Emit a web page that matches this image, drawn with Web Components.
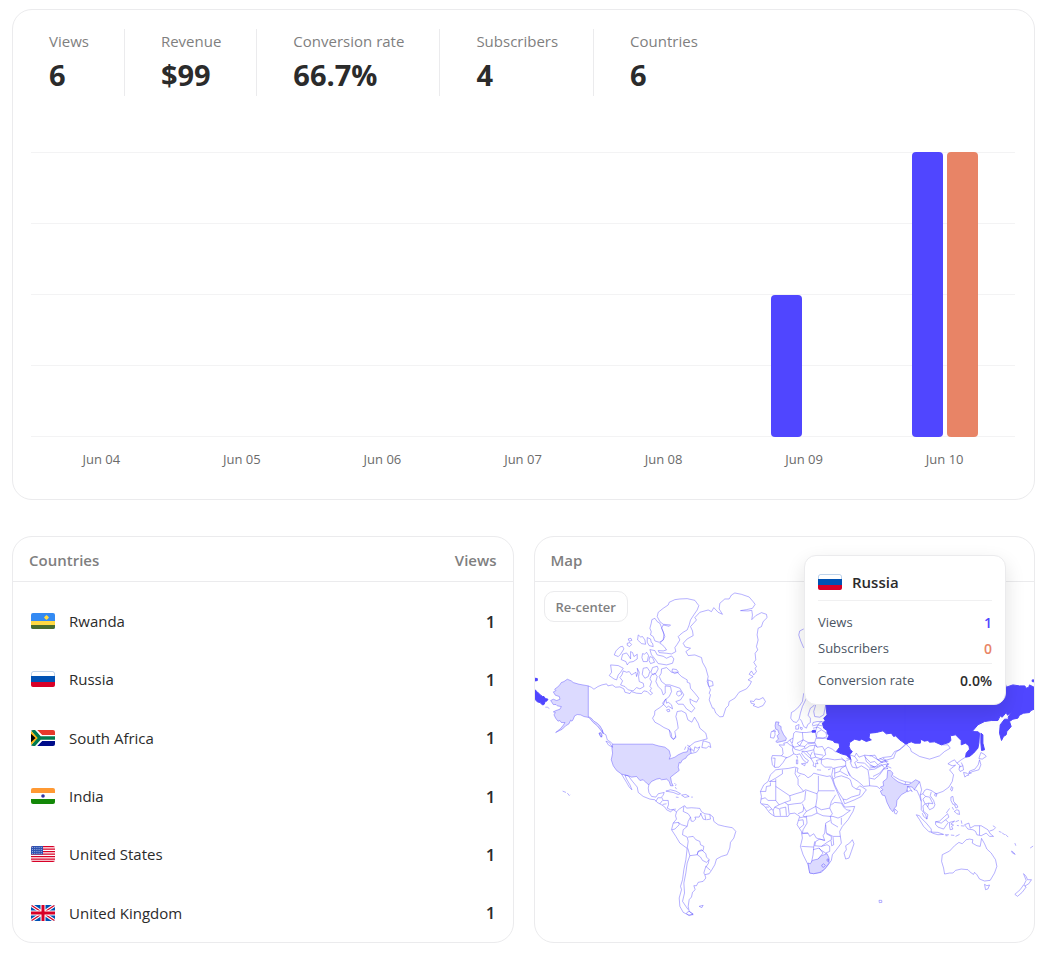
<!DOCTYPE html>
<html lang="en">
<head>
<meta charset="utf-8">
<meta name="viewport" content="width=device-width, initial-scale=1">
<title>Analytics</title>
<style>
  body {
    margin: 0;
    padding: 9px 10px 16px 12px;
    background: #fff;
    color: #2b2b2b;
    font-family: "Open Sans", "Noto Sans", sans-serif;
    font-size: 15px;
    --accent: #5046ff;
    --accent-2: #e88466;
    --muted: #7f7f7f;
    --line: #ebebed;
    --grid: #f3f3f4;
  }
  .row { display: grid; grid-template-columns: 1fr 1fr; gap: 20px; margin-top: 36px; }
</style>
</head>
<body>
<panel-card>
  <stats-bar>
    <stat-item label="Views">6</stat-item>
    <stat-item label="Revenue">$99</stat-item>
    <stat-item label="Conversion rate">66.7%</stat-item>
    <stat-item label="Subscribers">4</stat-item>
    <stat-item label="Countries">6</stat-item>
  </stats-bar>
  <bar-chart></bar-chart>
</panel-card>
<div class="row">
  <panel-card><countries-table></countries-table></panel-card>
  <panel-card>
    <map-panel>
      <map-tooltip slot="tooltip" country="Russia" flag="ru" views="1" subscribers="0" rate="0.0%"></map-tooltip>
    </map-panel>
  </panel-card>
</div>

<template id="map-art">
<svg viewBox="535 582 500 360" role="img" aria-label="World map of views">
  <!-- Alaska, Chukotka -->
  <g transform="translate(534 580) scale(.33333)">
    <path class="lit" d="M100 298L112 303L118 308L135 313L163 318L163 410L172 415L180 424L190 430L198 438L205 450L208 462L198 448L190 438L178 428L165 413L150 410L140 405L130 404L122 408L118 418L114 424L110 421L105 432L95 438L85 448L65 458L80 446L88 436L93 428L82 428L78 422L72 424L65 415L60 405L64 398L58 396L66 392L78 388L82 380L70 378L66 374L58 374L50 362L58 358L68 362L78 358L76 350L64 346L58 336L66 332L62 328L75 318L82 308L90 305Z"/>
    <path class="hot" d="M3 330L10 336L20 346L26 350L30 350L34 356L42 358L38 364L34 364L30 374L25 375L18 368L10 366L3 358ZM3 295L10 296L10 302L3 303Z"/>
    <path d="M34 382L40 382L46 386M195 460l6 -2l4 10l-4 4Z"/>
  </g>
  <!-- Arctic Canada, Greenland, Iceland -->
  <g transform="translate(600 585) scale(.33333)">
    <path d="M-35 303L-26 307L-18 313L-6 305L6 300L20 297L24 303L37 300L47 307L60 306L72 312L75 322L90 326L94 320L110 325L125 326L132 318L142 320L152 330L158 325L150 318L155 310L150 305L155 290L150 282L155 270L165 265L172 275L168 290L175 305L185 315L190 330L196 325L196 303L212 305L215 320L208 335L196 345L190 360L180 368L165 378L164 390L158 400L165 412L180 420L192 428L208 435L212 455L220 464L228 458L225 440L235 430L232 410L228 395L232 380L245 378L258 385L264 405L276 412L284 397L295 415L300 430L318 445L322 462L300 468L285 472L272 482L262 490"/>
    <path d="M240 42L262 41L285 46L297 62L292 75L283 88L272 105L268 120L262 135L250 142L240 150L235 155L240 165L232 178L225 188L228 200L215 207L200 205L178 203L175 197L190 198L200 195L193 185L185 178L180 175L190 165L195 155L190 140L185 130L190 120L208 124L212 120L190 118L180 110L172 95L175 82L190 70L205 60L208 52L225 44Z"/>
    <path d="M165 100L172 110L180 115L186 130L192 148L190 165L178 172L165 168L160 155L152 150L154 140L150 130L154 115L156 104ZM115 150L122 156L128 155L135 165L137 178L125 176L113 165ZM142 158L152 162L154 172L158 175L160 185L148 182L142 172ZM85 162l8 -2l3 6l-8 3ZM82 175l8 -2l5 6l-6 6l-7 -4ZM68 184L60 186L48 198L43 210L55 215L62 208L72 192Z"/>
    <path d="M68 208L80 204L88 215L92 222L92 200L98 203L102 215L112 208L112 222L100 230L88 232L82 240L78 230L64 224ZM128 206L134 208L140 202L146 212L142 230L130 230L126 218ZM150 194L165 197L172 210L190 214L200 220L215 213L222 222L218 235L200 240L175 236L165 222L155 210ZM150 215L158 218L164 232L152 236L147 226Z"/>
    <path d="M32 240L55 242L70 250L62 262L55 270L50 285L42 282L28 272L35 262ZM70 258L80 262L88 260L95 270L108 262L110 275L114 262L112 250L118 262L116 275L118 290L130 295L132 305L120 312L110 308L100 318L85 315L75 305L62 300L68 288L60 278L66 270ZM130 250L142 248L150 260L145 275L135 280L127 268ZM158 248L172 244L175 252L168 265L160 270L153 262Z"/>
    <path d="M185 252L200 248L215 262L232 262L245 275L262 285L262 292L270 295L272 310L285 325L297 340L290 352L280 348L270 342L272 355L285 370L275 382L260 372L250 358L235 358L228 350L242 345L252 330L240 310L225 305L210 300L198 300L185 290L178 275L184 265ZM218 252l12 2l6 8l-12 4l-8 -6ZM232 320l10 -2l4 10l-10 6l-6 -6ZM188 355L198 342L200 355L205 352L215 360L218 372L206 364L200 368ZM200 375l8 -2l2 6l-6 2Z"/>
    <path d="M310 468L318 470L330 474L333 488L326 484L320 490L306 488ZM268 498L275 492L282 500L285 486L292 490L300 486L296 494L290 502L275 506Z"/>
    <path d="M405 24L425 28L448 36L460 50L466 58L458 70L440 74L422 77L445 78L456 76L458 90L456 104L468 92L485 83L500 88L502 98L490 110L485 125L475 130L472 150L475 165L470 185L474 195L466 205L468 225L462 232L470 245L466 250L470 260L462 270L455 258L448 268L460 275L445 285L455 290L450 300L440 312L418 322L405 340L388 350L386 362L378 370L370 395L360 396L348 385L342 370L338 370L328 345L332 330L328 325L332 315L325 300L325 285L338 290L340 302L328 305L322 290L325 275L318 250L308 232L305 218L285 210L265 212L258 200L272 190L256 186L250 175L262 162L280 152L278 138L272 125L290 105L285 98L300 82L325 75L335 80L342 68L355 82L368 88L358 72L360 55L375 42L388 42L395 30Z"/>
    <path d="M452 348L462 350L468 342L478 344L490 338L497 350L490 362L475 368L460 362L465 358L454 355Z"/>
  </g>
  <!-- Americas -->
  <g transform="translate(550 730) scale(.33333)">
    <path class="lit" d="M188 43L308 43L325 48L345 52L358 62L362 78L358 88L375 82L385 75L400 68L412 66L416 55L422 60L424 70L412 78L408 85L398 90L392 100L388 98L385 112L388 122L375 132L362 142L365 158L370 168L362 168L358 155L350 148L335 150L330 146L320 148L305 155L297 165L290 160L280 150L270 152L260 140L245 142L235 138L215 133L200 122L190 108L184 90L188 70L186 55Z"/>
    <path d="M156 0L160 10L168 15L172 30L184 38L188 43M168 34l10 4l10 14l-12 -6ZM148 10l5 2l3 10l-6 -5ZM412 46L420 50L424 62M408 50L404 60M358 0L364 10L366 24L372 28L378 18"/>
    <path d="M215 133L222 145L230 158L238 172L246 180L240 165L230 148L225 136L235 138L248 155L262 172L265 188L280 200L300 208L315 210L322 218L335 225L345 232L350 240L362 246L370 240L380 246M297 165L295 175L297 188L305 200L318 202L325 192L343 188L340 196L335 202L340 212L355 212L356 225L352 235L362 240L378 238M318 215L324 204L334 204M330 222L338 212M338 224L350 222"/>
    <path d="M348 184L362 180L378 184L392 192L385 194L370 188ZM395 196L408 194L418 200L405 203ZM378 202l8 1M424 202l5 0M374 160l3 4M376 168l4 -3M376 172l4 6M38 184L48 188M52 190L58 197L60 195"/>
    <path d="M380 246L388 238L400 230L405 228L410 235L425 234L440 235L450 236L455 246L465 252L480 254L490 262L492 275L505 285L525 290L548 294L558 305L552 325L542 338L540 355L532 375L515 380L500 388L495 405L485 422L478 432L465 435L468 445L460 455L445 458L440 468L432 468L436 480L428 488L425 502L418 510L415 530L418 545L430 555L415 556L400 548L390 530L388 505L395 480L392 470L398 450L402 420L408 390L412 356L390 340L378 320L365 300L370 280L380 268L377 258Z"/>
    <path d="M402 230L400 245L415 252L422 262L415 275L412 290M370 280L385 278L395 285L412 290L400 300L398 315L412 322L415 335L412 356M366 300L375 298L388 285L386 278M415 322L430 320L438 330L450 335L452 345L462 350L460 362L445 365L442 375L420 378L414 356M442 375L445 365L455 360L468 372L470 382L478 390L470 398L458 392L452 382ZM420 378L412 400L408 430L402 460L404 490L398 515L408 530L415 540M468 410L482 422M468 410L462 430L465 435M478 390L475 402L468 412M422 262L424 274L430 275L438 268L435 262L448 262L454 250M452 250L460 268L468 270L465 255M480 254L482 268L470 270M448 530L460 527L456 534ZM412 548L418 545L430 553L418 558L410 552Z"/>
  </g>
  <!-- Europe, Africa, Middle East -->
  <g transform="translate(740 690) scale(.33333)">
    <path d="M192 10L188 35L178 50L165 62L155 68L153 85L160 95L170 98L178 88L182 70L188 50L200 25M182 88L186 95L192 110L200 115L204 104L212 98L212 85L205 76L212 55L222 48L228 38M228 45L222 65L225 80L240 82L252 75L255 60L258 45M218 106L220 98L232 95L248 95M218 108L232 105L248 108M220 115L234 112L245 118M168 108L178 104L176 118L168 118ZM182 112l6 2l-2 6l-4 -3Z"/>
    <path class="lit" d="M108 96L118 97L115 105L124 110L124 118L132 135L140 145L138 152L125 155L112 158L108 155L116 148L112 138L118 132L114 120L108 118L106 108Z"/>
    <path d="M95 125L105 124L106 135L102 145L92 143L93 132ZM98 124l6 -4l4 6"/>
    <path d="M248 95L240 98L232 110L228 122L215 126L200 128L185 128L168 125L162 130L160 145L150 150L142 158L132 160L134 166L118 165L128 175L130 192L125 198L98 197L95 205L98 225L105 233L118 232L130 218L138 205L150 200L162 192L170 195L180 192L190 210L202 220L206 212L196 205L185 190L190 185L200 195L215 208L222 220L220 228L228 232L228 220L235 222L230 212L245 208L250 200L258 195L255 180L265 172L278 178L290 188M98 205L106 205L104 232M125 198L142 204"/>
    <path d="M245 210L262 206L285 210L305 208L318 215L318 228L295 232L280 236L275 232L255 232L245 222ZM318 215L305 204M280 236L276 255L280 268M185 222l12 -2l-2 8ZM170 210l4 0l0 12l-4 0ZM170 200l3 0l0 6M232 240l12 1M265 240l8 -3"/>
    <path d="M142 158L150 165L160 170L158 180L162 192M150 150L156 160L160 170M160 145L158 160M165 178L160 170L165 172L180 168L172 160L190 150L188 128M190 150L205 158L225 158L230 142L226 124M190 150L180 168L195 170L205 160M195 170L195 175L180 182L165 178M205 162L225 160M195 178L210 168L226 166L222 180L200 185M226 166L232 172L248 170L255 182M222 180L224 192L250 196M200 185L212 198L218 186M212 198L214 206L228 202L246 208M224 192L228 202M185 184L200 185M230 142L232 128L245 120L258 128L262 140L250 145ZM225 158L232 172M230 146L262 145L285 150"/>
    <path d="M125 238L145 236L165 232L175 235L172 246L178 250L195 255L205 264L215 258L222 250L240 255L262 260L272 258L278 270L285 290L295 312L305 335L315 352L345 350L340 365L325 390L308 410L300 425L302 440L305 460L290 480L278 495L275 512L262 530L245 548L222 552L210 550L205 525L190 495L182 470L188 445L185 425L172 405L176 392L180 380L165 370L150 372L145 380L130 380L105 380L90 370L75 350L62 340L65 320L62 305L72 285L85 275L92 255L108 240Z"/>
    <path d="M128 240L128 252L108 265L90 275M62 305L78 305L80 290L92 288M88 275L108 275M92 288L92 278M108 268L108 332L85 332L76 324L64 328M108 290L150 318L168 312L192 305L175 285L175 268L166 252L168 235M175 262L182 255M192 303L198 300L232 312M236 258L236 303L285 303M236 303L232 312L232 325L228 350M150 318L152 332L135 338L145 345L165 342L185 340L195 330L198 303M188 342L192 352L190 365L175 372M192 352L200 365L228 350M200 365L190 378L198 384M145 345L148 372M135 338L118 345L108 332M118 345L105 352L100 362L85 345L65 342M105 352L120 358L122 378M138 352L120 356M138 352L140 378M100 362L103 378M88 362L96 358M78 352L88 352"/>
    <path d="M228 350L245 360L270 355L275 335L288 315M228 350L232 370L250 378L272 380L278 372L270 355M198 380L215 378L232 370M275 345L285 338L305 340L312 352L320 360L332 362L310 378L295 385L280 380L272 380M305 384L305 405M272 380L275 400L295 412M200 380L202 400L190 420L188 430L205 430L210 440L222 432L230 445L240 448L255 452L250 438L255 430L258 400L272 392M176 392L190 390L192 405L180 415M180 384L200 380M258 405L260 430L280 440L302 440M255 452L240 448L228 455L225 468L245 470L262 458L275 450L275 440L260 432M185 470L222 472L225 455M222 472L220 495L215 520M220 480L238 475L250 490L235 508M245 470L262 465L270 470L270 485L258 490L245 482L238 475M280 442L282 465L276 468L274 452M258 490L264 500M205 430L186 432"/>
    <path class="lit" d="M205 520L212 522L218 512L235 508L245 498L262 492L268 505L268 520L255 538L240 548L222 552L210 550Z"/>
    <path d="M246 526l6 -4l5 5l-5 6l-5 -2ZM262 508l5 0l0 7l-5 -1ZM338 450L343 462L335 485L328 505L318 508L313 490L320 480L318 468L330 460Z"/>
    <path class="hot" d="M217 123l6 -2l5 2l-1 4l-10 0Z"/>
    <path class="hot" d="M258 35L260 60L262 75L252 85L256 92L248 100L252 115L262 122L262 130L268 138L262 148L280 152L284 158L298 160L300 172L290 185L305 192L320 196L333 208L330 195L338 185L332 180L328 170L330 158L345 148L360 152L366 148L380 155L395 150L388 145L390 130L410 128L430 123L440 132L455 130L462 140L468 138L480 150L498 162L504 162L504 -30L258 -30Z"/>
    <path d="M333 208L320 205M320 212L333 208L335 218M330 195L345 200L354 212L345 218L352 235L338 232L332 218L335 208M345 200L350 190L358 202L375 196L380 215L392 225L405 232L415 225L405 215L392 218L375 200M375 196L395 198L415 210L430 203L455 200L465 185L480 180L498 165M352 218L375 220L390 235L405 232M415 225L428 215L440 212L430 205M415 210L426 218L446 214M318 228L325 245L335 262L355 275L372 290L390 288L388 260L385 240L365 228L352 235M388 240L405 238L430 225L448 222L432 238L420 255L405 268L390 265M390 288L412 290L422 298M440 228L455 235M432 238L445 236M318 228L304 236L300 245L285 250M285 235L285 262M302 245L325 258M325 245L330 258"/>
    <path d="M280 268L290 262L305 258L325 265L332 270L338 290L350 298L360 288L368 292L380 300L365 320L345 330L315 342L310 328L295 305L285 285ZM310 328L320 330L335 322L360 315L362 300L350 298"/>
  </g>
  <!-- Asia, Oceania -->
  <g transform="translate(870 680) scale(.33333)">
    <path class="hot" d="M106 0L106 192L125 186L135 190L152 190L154 178L164 184L175 182L180 187L195 186L215 195L238 188L244 182L242 168L258 165L268 175L275 182L275 195L288 190L298 198L300 208L290 220L288 232L300 230L312 220L325 205L328 190L330 160L326 156L308 155L325 135L345 125L365 122L385 122L392 108L398 112L410 98L414 106L426 95L416 112L418 118L405 118L392 135L390 160L396 182L402 170L410 165L412 155L425 140L420 125L430 118L445 115L450 106L462 100L480 98L484 92L494 88L494 22L480 15L478 22L470 25L466 18L450 18L430 15L410 22L405 0Z"/>
    <path class="hot" d="M334 160L340 165L340 190L345 210L336 212L334 190ZM488 0L494 0L494 6L488 5Z"/>
    <path d="M108 192L95 205L78 218L72 235L45 242L30 236M45 242L55 252L50 258L54 268M0 258L20 262L36 254L44 264L30 280L10 290M108 192L122 205L125 215L150 230L180 238L210 228L225 215L242 205L235 195L215 195M0 228L16 226L24 240L40 248"/>
    <path class="lit" d="M54 272L62 272L70 280L66 290L72 296L85 306L105 314L118 314L130 306L138 300L150 306L142 318L134 330L128 322L114 320L112 335L95 345L82 362L80 380L75 384L70 396L62 388L52 368L46 348L38 346L32 334L40 330L32 322L42 318L40 306L52 296Z"/>
    <path d="M76 388L84 395L80 403L74 400ZM70 288L90 300L108 306L106 314M108 306L124 308M112 320L118 322L128 335L122 332L114 336L112 330"/>
    <path d="M288 232L275 240L262 250L255 240L245 245L235 252L248 258L258 256L240 270L252 285L248 305L238 322L220 335L200 342L185 332L172 328L165 332L160 342L152 345L156 330L150 306M262 250L272 258L268 268L272 275L282 270L280 258L275 248M268 262L280 258M196 342l6 0l-2 8l-5 -3ZM246 320l4 4l-3 10l-4 -4Z"/>
    <path d="M334 218L345 224L350 230L338 238L328 236ZM330 240L334 255L328 270L310 275L298 280L300 274L316 268L326 255ZM282 278L292 280L298 286L290 288L286 292ZM296 282l10 -2"/>
    <path d="M134 330L142 332L150 350L155 365L155 390L168 405L172 418L162 410L158 400M172 418L175 405L162 395L160 378L168 372L175 382L180 390L192 384L196 375L192 362L182 348L185 336M152 345L155 365M160 342L168 350L180 352L190 372L178 370L168 372M168 350L160 358L166 372M178 370L174 382"/>
    <path d="M140 405L150 408L155 415L170 430L185 448L185 457L178 456L162 440L150 420ZM185 457L205 458L222 464L205 465L188 460ZM226 465l12 0M228 468l6 0M244 466l10 1M258 470l12 -6M198 426L210 424L225 410L234 402L238 412L228 420L236 428L222 448L205 442L198 434ZM198 426L215 430L228 420M240 428L255 424L244 433L252 436L246 440L250 448L242 450L240 440ZM258 426l10 -4"/>
    <path d="M244 352L250 350L252 365L258 372L250 374L244 362ZM255 376l6 -2l4 8l-6 3ZM254 395L262 390L268 392L270 404L262 402L258 398ZM230 400L240 386M248 382l4 8M275 422l2 10M262 437l6 1M274 438l10 1"/>
    <path d="M285 435L298 430L302 445L315 438L335 438L355 450L362 462L372 470L360 470L350 460L335 468L322 465L318 455L310 450L295 448ZM330 438L330 466M360 454L372 450L378 444M370 438l8 5M388 455l8 3M398 460l8 5M408 464l8 8M426 514l5 3l6 7l-8 -4ZM436 490l3 8M482 505l9 -6"/>
    <path d="M300 478L310 480L308 490L322 498L332 500L336 476L345 492L352 508L365 520L378 540L382 560L375 580L362 602L345 604L330 598L322 585L315 578L312 584L305 580L295 570L275 568L258 572L250 580L240 580L225 583L222 565L216 545L218 525L240 514L255 498L268 488L278 492L290 480ZM345 614L352 618L360 616L355 628L348 630ZM462 582L470 590L474 600L486 600L478 612L468 618L464 614L470 602ZM462 616L470 622L458 638L444 650L436 644L452 630ZM28 662l8 0l1 6l-8 1Z"/>
  </g>
  <!-- Svalbard -->
  <path d="M804 629L800 631L799 635L801 641L804 648"/>
</svg>
</template>

<script>
const define = (name, html, setup) => {
  const tpl = document.createElement('template');
  tpl.innerHTML = html;
  customElements.define(name, class extends HTMLElement {
    connectedCallback() {
      if (this.shadowRoot) return;
      const root = this.attachShadow({ mode: 'open' });
      root.append(tpl.content.cloneNode(true));
      if (setup) setup.call(this, root);
    }
  });
};

const FLAGS = {
  rw: `<path fill="#338af3" d="M0 0h24v16H0z"/><path fill="#ffda44" d="M0 8h24v4H0z"/><path fill="#496e2d" d="M0 12h24v4H0z"/><circle cx="15.500" cy="4.500" r="2" fill="#ffda44"/><path stroke="#ffda44" stroke-width=".6" d="M15.500 2v5M13 4.500h5"/>`,
  ru: `<path fill="#fff" d="M0 0h24v16H0z"/><rect x=".5" y=".5" width="23" height="15" rx="2" fill="none" stroke="#0052b4" stroke-opacity=".25"/><path fill="#0052b4" d="M0 5h24v6H0z"/><path fill="#d80027" d="M0 11h24v5H0z"/>`,
  za: `<path fill="#e6392b" d="M0 0h24v8H0z"/><path fill="#000c8a" d="M0 8h24v8H0z"/><path stroke="#fff" stroke-width="6" fill="none" d="M0 -2L10 8L0 18M10 8h14"/><path fill="#000" d="M0 2l6 6l-6 6z"/><path stroke="#ffb612" stroke-width="2" fill="none" d="M-1 1.500L6 8L-1 14.500"/><path stroke="#007a4d" stroke-width="3.400" fill="none" d="M0 -2L9 8L0 18M8 8h16"/>`,
  in: `<path fill="#fff" d="M0 0h24v16H0z"/><path fill="#ff9933" d="M0 0h24v5H0z"/><path fill="#138808" d="M0 11h24v5H0z"/><circle cx="12" cy="8" r="1.800" fill="#000088" opacity=".8"/>`,
  us: `<path fill="#fff" d="M0 0h24v16H0z"/><path stroke="#d80027" stroke-width="1.250" d="M0 .6h24M0 3.100h24M0 5.600h24M0 8h24M0 10.500h24M0 13h24M0 15.400h24"/><path fill="#2e52b2" d="M0 0h12v8.600H0z"/><path stroke="#fff" stroke-opacity=".65" stroke-width=".8" stroke-dasharray="1 1.200" d="M1 1.500h10M1 3.500h10M1 5.500h10M1 7.400h10"/>`,
  gb: `<path fill="#0052b4" d="M0 0h24v16H0z"/><path stroke="#fff" stroke-width="3.400" d="M0 0l24 16M24 0L0 16"/><path stroke="#d80027" stroke-width="1.200" d="M0 0l24 16M24 0L0 16"/><path stroke="#fff" stroke-width="5" d="M12 0v16M0 8h24"/><path stroke="#d80027" stroke-width="3" d="M12 0v16M0 8h24"/>`
};

define('country-flag', `
<style>:host{display:block;width:24px;height:16px;border-radius:2px;overflow:hidden}svg{display:block;width:100%;height:100%}</style>
<svg viewBox="0 0 24 16" aria-hidden="true"></svg>`,
function (root) { root.querySelector('svg').innerHTML = FLAGS[this.getAttribute('code')]; });

define('panel-card', `
<style>:host{display:block;box-sizing:border-box;min-width:0;border:1px solid var(--line);border-radius:20px;background:#fff}</style>
<slot></slot>`);

define('stats-bar', `
<style>:host{display:flex;flex-wrap:wrap;padding:19px 0 0}</style>
<slot></slot>`);

define('stat-item', `
<style>
  :host{display:block;padding:0 35px 0 36px;border-right:1px solid var(--line)}
  :host(:last-child){border-right:0}
  .label{color:var(--muted);line-height:25px}
  .value{font-size:29px;font-weight:700;line-height:42px}
</style>
<div class="label"></div><div class="value"><slot></slot></div>`,
function (root) { root.querySelector('.label').textContent = this.getAttribute('label'); });

define('bar-chart', `
<style>
  :host{display:block;padding:56px 19px 30px 18px}
  .plot{display:grid;grid-template-columns:repeat(7,1fr);height:285px;
    background:repeating-linear-gradient(to bottom,var(--grid) 0 1px,transparent 1px 71px)}
  .day{display:flex;justify-content:center;align-items:flex-end;gap:4px}
  .bar{width:22%;border-radius:4px;height:0;background:var(--accent)}
  .bar + .bar{background:var(--accent-2)}
  .half{height:50%}
  .full{height:100%}
  .axis{display:grid;grid-template-columns:repeat(7,1fr);padding-top:12px;font-size:13px;line-height:20px;color:#6b6b6b;text-align:center}
</style>
<div class="plot"></div><div class="axis"></div>`,
function (root) {
  const days = [['Jun 04'], ['Jun 05'], ['Jun 06'], ['Jun 07'], ['Jun 08'], ['Jun 09', 'half', ''], ['Jun 10', 'full', 'full']];
  root.querySelector('.plot').innerHTML = days.map(([, a = '', b = '']) =>
    `<div class="day"><div class="bar ${a}"></div><div class="bar ${b}"></div></div>`).join('');
  root.querySelector('.axis').innerHTML = days.map(([d]) => `<div>${d}</div>`).join('');
});

define('countries-table', `
<style>
  :host{display:block}
  table{display:block}
  tr{display:flex;justify-content:space-between;align-items:center}
  thead tr{height:44px;padding:2px 16px 0;box-sizing:border-box;color:var(--muted)}
  thead{display:block;border-bottom:1px solid var(--line)}
  th{padding:0;font-weight:600}
  tbody{display:grid;grid-template-rows:repeat(6,1fr);height:350px;padding-top:10px}
  tbody tr{padding:0 17px 0 18px}
  td{padding:0}
  .name{display:flex;align-items:center;gap:14px}
  .num{font-size:17px;font-weight:600}
</style>
<table>
  <thead><tr><th scope="col">Countries</th><th scope="col">Views</th></tr></thead>
  <tbody></tbody>
</table>`,
function (root) {
  const rows = [['rw', 'Rwanda'], ['ru', 'Russia'], ['za', 'South Africa'], ['in', 'India'], ['us', 'United States'], ['gb', 'United Kingdom']];
  root.querySelector('tbody').innerHTML = rows.map(([c, n]) =>
    `<tr><td class="name"><country-flag code="${c}"></country-flag><span>${n}</span></td><td class="num">1</td></tr>`).join('');
});

define('map-panel', `
<style>
  :host{display:block;position:relative}
  h2{margin:0;height:44px;box-sizing:border-box;padding:2px 16px 0;display:flex;align-items:center;font-size:15px;font-weight:600;color:var(--muted)}
  .map{position:relative;border-top:1px solid var(--line);border-radius:0 0 19px 19px;overflow:hidden}
  svg{display:block;width:100%;height:auto}
  path{fill:#fff;fill-opacity:0;stroke:var(--accent);stroke-opacity:.42;stroke-width:1;stroke-linejoin:round;vector-effect:non-scaling-stroke}
  .lit{fill:#dcdaff;fill-opacity:1}
  .hot{fill:var(--accent);fill-opacity:1;stroke-opacity:1}
  button{position:absolute;left:9px;top:9px;height:31px;padding:0 11px;border:1px solid var(--line);border-radius:10px;background:#fff;color:var(--muted);font:600 13px "Open Sans","Noto Sans",sans-serif}
  ::slotted(map-tooltip){position:absolute;right:28px;top:18px}
</style>
<h2>Map</h2>
<div class="map"><button type="button">Re-center</button></div>
<slot name="tooltip"></slot>`,
function (root) { root.querySelector('.map').prepend(document.getElementById('map-art').content.cloneNode(true)); });

define('map-tooltip', `
<style>
  :host{display:block;box-sizing:border-box;width:202px;padding:8px 13px;border:1px solid var(--line);border-radius:12px;background:#fff;box-shadow:0 8px 20px rgba(0,0,0,.12);font-size:13px}
  .head{display:flex;align-items:center;gap:10px;height:36px;border-bottom:1px solid #f0f0f1;margin-bottom:8px;font-size:15px;font-weight:600}
  .line{display:flex;justify-content:space-between;align-items:center;height:26px;color:#4b5563}
  b{font-size:14px;font-weight:600}
  .v b{color:var(--accent)} .s b{color:var(--accent-2)}
  .r{border-top:1px solid #f0f0f1;margin-top:2px;height:32px}
  .r b{color:#2b2b2b}
</style>
<div class="head"><country-flag></country-flag><span></span></div>
<div class="line v"><span>Views</span><b></b></div>
<div class="line s"><span>Subscribers</span><b></b></div>
<div class="line r"><span>Conversion rate</span><b></b></div>`,
function (root) {
  const q = (s) => root.querySelector(s), a = (n) => this.getAttribute(n);
  const flag = document.createElement('country-flag');
  flag.setAttribute('code', a('flag'));
  q('country-flag').replaceWith(flag);
  q('.head span').textContent = a('country');
  q('.v b').textContent = a('views');
  q('.s b').textContent = a('subscribers');
  q('.r b').textContent = a('rate');
});
</script>
</body>
</html>
